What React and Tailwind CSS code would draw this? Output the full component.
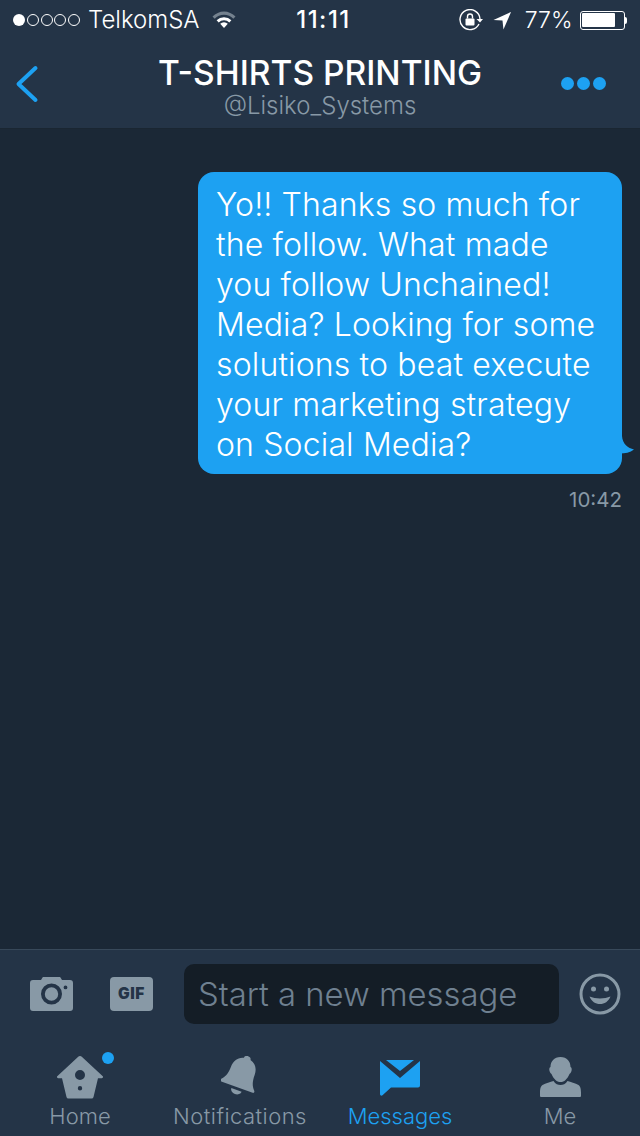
const MUTED = '#8899a6';

const StatusBar = () => {
  return (
    <div className="flex h-10 items-center justify-between px-[13px] text-white">
      <div className="flex w-[260px] items-center">
        <div className="flex items-center gap-[1.75px]">
          <span className="h-[12px] w-[12px] rounded-full bg-white" />
          {[0, 1, 2, 3].map((i) => (
            <span key={i} className="h-[12px] w-[12px] rounded-full border border-white" />
          ))}
        </div>
        <span className="ml-[8px] text-[24px] leading-none font-light">TelkomSA</span>
        <svg className="ml-[12px]" width="24" height="18" viewBox="0 0 24 18">
          <path d="M0.5 5.500a16 16 0 0 1 23 0l-2.200 2.200a13 13 0 0 0-18.600 0z" fill="#75828f" />
          <path d="M4.600 9.300a10.400 10.400 0 0 1 14.800 0l-2.100 2.100a7.400 7.400 0 0 0-10.600 0z" fill="#fff" />
          <path d="M8.200 12.800a5.400 5.400 0 0 1 7.600 0L12 17z" fill="#fff" />
        </svg>
      </div>
      <span className="ml-[7px] text-[24px] leading-none font-medium tracking-[1.5px]">11:11</span>
      <div className="flex w-[260px] items-center justify-end">
        <svg width="24" height="22" viewBox="0 0 24 22" fill="none">
          <path d="M20 15a10 10 0 1 1 1-5" stroke="#fff" strokeWidth="1.400" />
          <path d="M17.500 10h6.500L21 13.500z" fill="#fff" />
          <rect x="6.500" y="9.500" width="9" height="7" rx="1" fill="#fff" />
          <path d="M8.500 9.500V7.500a2.500 2.500 0 0 1 5 0v2" stroke="#fff" strokeWidth="1.400" />
        </svg>
        <svg className="ml-[10px]" width="19" height="19" viewBox="0 0 20 20">
          <path d="M19 1L0.500 9.500l9.500 0.500 1 9.500z" fill="#fff" />
        </svg>
        <span className="ml-[13px] text-[23px] leading-none font-light">77%</span>
        <div className="ml-[7px] flex items-center">
          <div className="h-[19px] w-[45px] rounded-[3px] border border-white p-[1.5px]">
            <div className="h-full w-[33px] rounded-[1px] bg-white" />
          </div>
          <div className="ml-[0.5px] h-[7px] w-[2px] rounded-r-sm bg-white" />
        </div>
      </div>
    </div>
  );
};

const Header = () => {
  return (
    <div className="h-[129px] border-b border-[#1a2632] bg-[#243447]">
      <StatusBar />
      <div className="grid grid-cols-[1fr_auto_1fr] items-start">
        <svg className="ml-[15px] mt-[25px]" width="24" height="38" viewBox="0 0 24 38" fill="none">
          <path d="M20.500 3L3.500 19l17 16" stroke="#1da1f2" strokeWidth="4" strokeLinecap="round" strokeLinejoin="round" />
        </svg>
        <div className="flex flex-col items-center">
          <h1 className="mt-[15px] text-[33.5px] leading-[36px] font-medium text-white">T-SHIRTS PRINTING</h1>
          <p className="text-[24px] leading-[29px] font-light text-[#8899a6]">@Lisiko_Systems</p>
        </div>
        <div className="mr-[34px] mt-[37px] flex justify-end gap-[3px]">
          <span className="h-[13px] w-[13px] rounded-full bg-[#1da1f2]" />
          <span className="h-[13px] w-[13px] rounded-full bg-[#1da1f2]" />
          <span className="h-[13px] w-[13px] rounded-full bg-[#1da1f2]" />
        </div>
      </div>
    </div>
  );
};

const Message = () => {
  return (
    <div className="flex flex-col items-end pr-[18px] pt-[43px]">
      <div className="relative w-[424px] rounded-[16px] bg-[#1da1f2] pb-[9px] pl-[18px] pr-[21px] pt-[13px] text-[32px] leading-[40px] font-light tracking-[0.15px] text-white">
        Yo!! Thanks so much for the follow. What made you follow Unchained! Media? Looking for some solutions to beat execute your marketing strategy on Social Media?
        <svg className="absolute -right-[14px] bottom-[20px]" width="16" height="18" viewBox="0 0 16 18">
          <path d="M0 0h2c0.500 8 6 12 12 13.500-4 3-9 4-14 4z" fill="#1da1f2" />
        </svg>
      </div>
      <span className="mt-[13px] text-[20.5px] leading-[25px] font-normal text-[#8899a6]">10:42</span>
    </div>
  );
};

const Composer = () => {
  return (
    <div className="flex h-[90px] items-center border-t border-[#38495a] pb-[1px] pl-[30px] pr-[19px]">
      <svg width="43" height="34" viewBox="0 0 43 34">
        <path
          fillRule="evenodd"
          fill={MUTED}
          d="M3 3h8l1.500-2.500a1 1 0 0 1 1-.5h16a1 1 0 0 1 1 .5L32 3h8a3 3 0 0 1 3 3v25a3 3 0 0 1-3 3H3a3 3 0 0 1-3-3V6a3 3 0 0 1 3-3zM21.500 6.500a10.500 10.500 0 1 0 0 21 10.500 10.500 0 0 0 0-21zm0 3.800a6.700 6.700 0 1 1 0 13.400 6.700 6.700 0 0 1 0-13.400zM35.500 8.500a1.900 1.900 0 1 0 0 3.800 1.900 1.900 0 0 0 0-3.800z"
        />
      </svg>
      <div className="ml-[37px] flex h-[34px] w-[43px] items-center justify-center rounded-[4px] bg-[#8899a6] text-[15.5px] font-black tracking-[0.5px] text-[#243447]">
        GIF
      </div>
      <div className="ml-[31px] flex h-[60px] w-[375px] items-center rounded-[10px] bg-[#141d26] pl-[14px] pt-[2px] text-[32.8px] font-light text-[#6f8090]">
        Start a new message
      </div>
      <svg className="ml-[20px]" width="42" height="42" viewBox="0 0 42 42" fill="none">
        <circle cx="21" cy="21" r="19" stroke={MUTED} strokeWidth="3" />
        <circle cx="14.500" cy="16" r="2.500" fill={MUTED} />
        <circle cx="27.500" cy="16" r="2.500" fill={MUTED} />
        <path d="M10.500 23.500c6 2.500 15 2.500 21 0-2 5-6 7.500-10.500 7.500s-8.500-2.500-10.500-7.500z" fill={MUTED} />
      </svg>
    </div>
  );
};

const TabItem = ({ label, active, wide, children }) => {
  return (
    <div className="flex flex-col items-center">
      <div className="relative h-[44px] w-full">{children}</div>
      <span
        className={`mt-[2px] text-[22px] leading-[28px] font-light ${wide ? 'tracking-[0.46px]' : ''} ${
          active ? 'text-[#1da1f2]' : 'text-[#8899a6]'
        }`}
      >
        {label}
      </span>
    </div>
  );
};

const TabBar = () => {
  return (
    <div className="grid grid-cols-4 pt-[17px]">
      <TabItem label="Home">
        <svg className="mx-auto" width="46" height="43" viewBox="0 0 46 43">
          <path
            fillRule="evenodd"
            fill={MUTED}
            d="M23 0a2 2 0 0 1 1.500.6L45.500 20a1.300 1.300 0 0 1-1 2.300H41L36.500 41a2 2 0 0 1-2 1.500h-23a2 2 0 0 1-2-1.500L5 22.300H1.500a1.300 1.300 0 0 1-1-2.300L21.500.6A2 2 0 0 1 23 0zM23 14a5 5 0 1 0 0 10 5 5 0 0 0 0-10zm0 16a2.200 2.200 0 1 0 0 4.400 2.200 2.200 0 0 0 0-4.400z"
          />
        </svg>
        <span className="absolute left-[102px] top-[-4px] h-[12px] w-[12px] rounded-full bg-[#1da1f2]" />
      </TabItem>
      <TabItem label="Notifications" wide>
        <svg className="mx-auto" width="38" height="44" viewBox="0 0 38 44">
          <g transform="translate(20.600 19.700) rotate(20)">
            <path
              fill={MUTED}
              d="M0 -20.500c1.800 0 3 1.200 3 2.800 6 1.500 9 6.500 9 12.500 0 6 1 11 5 15 1 1 .5 2.500-.8 2.500h-33.400c-1.300 0-1.800-1.500-.8-2.500 4-4 5-9 5-15 0-6 3-11 9-12.500 0-1.600 1.200-2.800 3-2.800z"
            />
            <path fill={MUTED} d="M-5.500 15a5.500 4.500 0 0 0 11 0z" />
          </g>
        </svg>
      </TabItem>
      <TabItem label="Messages" active>
        <svg className="mx-auto mt-[4px]" width="40" height="36" viewBox="0 0 40 36">
          <path
            fill="#1da1f2"
            d="M0 1l20 17L40 1v24.500a2 2 0 0 1-2 2H11L2.500 35.300C1.500 36.200 0 35.500 0 34zM6 0h28L20 11z"
          />
        </svg>
      </TabItem>
      <TabItem label="Me">
        <svg className="mx-auto mt-[1px]" width="41" height="40" viewBox="0 0 41 40">
          <path
            fill={MUTED}
            d="M20.500 0c6.500 0 10 4.500 10 10 1.200.5 1.500 2 1 4-.5 1.500-1.300 2.500-2 3-1 2.500-2.500 4.500-4 6-1.500 1.500-3 2-5 2s-3.500-.5-5-2c-1.500-1.500-3-3.500-4-6-.7-.5-1.500-1.500-2-3-.5-2-.2-3.500 1-4 0-5.500 3.500-10 10-10z"
          />
          <path
            fill={MUTED}
            d="M13.500 24c2 3 4.500 4 7 4s5-1 7-4c3 1.200 8 2 11 4 1.500 1 2.500 3 2.500 8v3a1 1 0 0 1-1 1H1a1 1 0 0 1-1-1v-3c0-5 1-7 2.500-8 3-2 8-2.800 11-4z"
          />
        </svg>
      </TabItem>
    </div>
  );
};

export default function App() {
  return (
    <div className="flex h-[1136px] w-[640px] flex-col overflow-hidden bg-[#1b2836] font-['Inter',sans-serif]">
      <Header />
      <div className="flex-1">
        <Message />
      </div>
      <div className="h-[187px] bg-[#243447]">
        <Composer />
        <TabBar />
      </div>
    </div>
  );
}
